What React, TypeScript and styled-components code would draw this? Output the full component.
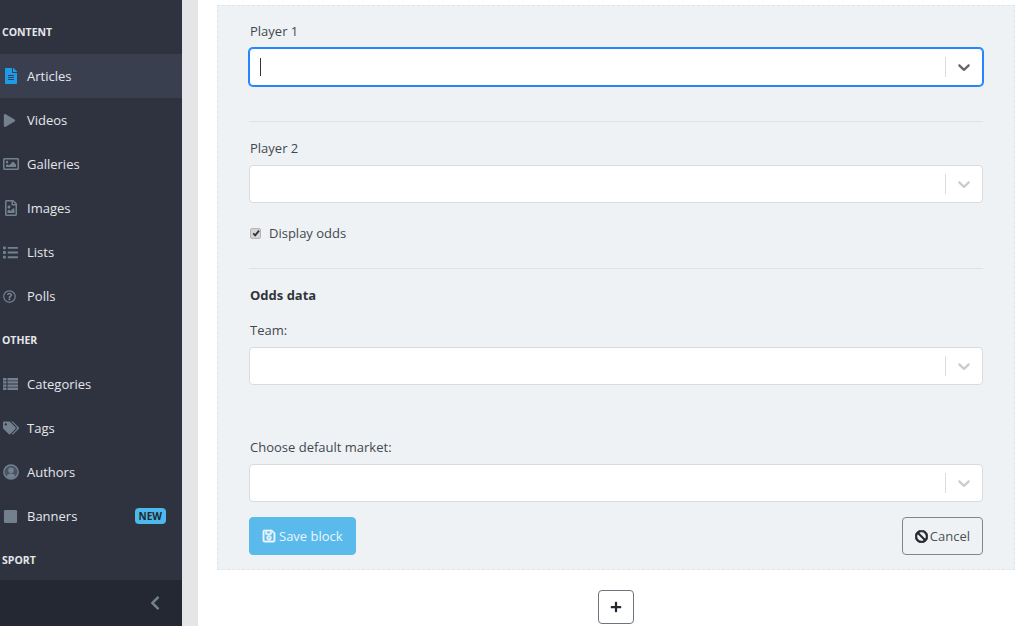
import type { ReactNode } from 'react';
import styled, { createGlobalStyle } from 'styled-components';
import {
  FaBan,
  FaChevronLeft,
  FaFileAlt,
  FaList,
  FaPlay,
  FaPlus,
  FaRegFileImage,
  FaRegImage,
  FaRegQuestionCircle,
  FaRegSave,
  FaSquare,
  FaTags,
} from 'react-icons/fa';

const GlobalStyle = createGlobalStyle`
  html, body {
    margin: 0;
    padding: 0;
    height: 100%;
    overflow: hidden;
    background: #fff;
    font-family: "Open Sans", "Noto Sans", "Liberation Sans", sans-serif;
    font-size: 13px;
    color: #3f4850;
  }
  * { box-sizing: border-box; }
`;

const Chevron = () => (
  <svg width="20" height="20" viewBox="0 0 20 20" fill="currentColor">
    <path d="M4.516 7.548c0.436-0.446 1.043-0.481 1.576 0l3.908 3.747 3.908-3.747c0.533-0.481 1.141-0.446 1.574 0 0.436 0.445 0.408 1.197 0 1.615-0.406 0.418-4.695 4.502-4.695 4.502-0.217 0.223-0.502 0.335-0.787 0.335s-0.57-0.112-0.789-0.335c0 0-4.287-4.084-4.695-4.502s-0.436-1.17 0-1.615z" />
  </svg>
);

// dense four row list, the icon pack only has blockier ones
const CategoriesIcon = () => (
  <svg width="15" height="12" viewBox="0 0 15 12" fill="currentColor">
    <path d="M0 0h3.5v2.4H0zM4.5 0H15v2.4H4.5zM0 3.2h3.5v2.4H0zM4.5 3.2H15v2.4H4.5zM0 6.4h3.5v2.4H0zM4.5 6.4H15v2.4H4.5zM0 9.6h3.5V12H0zM4.5 9.6H15V12H4.5z" />
  </svg>
);

const AuthorIcon = () => (
  <svg width="16" height="16" viewBox="0 0 16 16">
    <circle cx="8" cy="8" r="7.1" fill="#4a5361" stroke="currentColor" strokeWidth="1.5" />
    <circle cx="8" cy="6.3" r="2.8" fill="currentColor" />
    <path d="M3.6 12.6c.5-2.2 2-3.2 4.4-3.2s3.900 1 4.400 3.200c-1.100 1.100-2.600 1.800-4.400 1.800s-3.300-.7-4.400-1.800z" fill="currentColor" />
  </svg>
);

const Select = ({ focused }: { focused?: boolean }) => (
  <SelectBox $focused={focused}>
    <SelectValue>{focused && <Caret />}</SelectValue>
    <SelectDivider />
    <SelectArrow $focused={focused}>
      <Chevron />
    </SelectArrow>
  </SelectBox>
);

const NavItem = ({
  icon,
  label,
  active,
  badge,
}: {
  icon: ReactNode;
  label: string;
  active?: boolean;
  badge?: string;
}) => (
  <NavRow $active={active}>
    <NavIcon $active={active}>{icon}</NavIcon>
    <span>{label}</span>
    {badge && <Badge>{badge}</Badge>}
  </NavRow>
);

export default function App() {
  return (
    <>
      <GlobalStyle />
      <Page>
        <Sidebar>
          <Nav>
            <NavTitle>CONTENT</NavTitle>
            <NavItem active icon={<FaFileAlt size={16} />} label="Articles" />
            <NavItem icon={<FaPlay size={13} />} label="Videos" />
            <NavItem icon={<FaRegImage size={16} />} label="Galleries" />
            <NavItem icon={<FaRegFileImage size={16} />} label="Images" />
            <NavItem icon={<FaList size={15} />} label="Lists" />
            <NavItem icon={<FaRegQuestionCircle size={13} />} label="Polls" />
            <NavTitle>OTHER</NavTitle>
            <NavItem icon={<CategoriesIcon />} label="Categories" />
            <NavItem icon={<FaTags size={16} />} label="Tags" />
            <NavItem icon={<AuthorIcon />} label="Authors" />
            <NavItem icon={<FaSquare size={15} />} label="Banners" badge="NEW" />
            <NavTitle>SPORT</NavTitle>
          </Nav>
          <SidebarFooter>
            <FaChevronLeft size={16} />
          </SidebarFooter>
        </Sidebar>
        <Main>
          <Panel>
            <Label>Player 1</Label>
            <Select focused />
            <Rule $top={35} />
            <Label $top={16}>Player 2</Label>
            <Select />
            <CheckRow>
              <CheckBox>
                <svg width="8" height="8" viewBox="0 0 10 10" fill="none" stroke="#333" strokeWidth="2.2">
                  <path d="M1.500 5.500 L4 8 L8.800 2" />
                </svg>
              </CheckBox>
              Display odds
            </CheckRow>
            <Rule $top={24} />
            <Heading>Odds data</Heading>
            <Label $top={14}>Team:</Label>
            <Select />
            <Label $top={52}>Choose default market:</Label>
            <Select />
            <Actions>
              <SaveButton>
                <FaRegSave size={14} />
                Save block
              </SaveButton>
              <CancelButton>
                <FaBan size={13} />
                Cancel
              </CancelButton>
            </Actions>
          </Panel>
          <AddRow>
            <AddButton>
              <FaPlus size={12} />
            </AddButton>
          </AddRow>
        </Main>
      </Page>
    </>
  );
}

const Page = styled.div`
  display: flex;
  height: 626px;
  width: 1024px;
  overflow: hidden;
`;

const Sidebar = styled.aside`
  width: 182px;
  flex-shrink: 0;
  display: flex;
  flex-direction: column;
  background: #2f3340;
  color: #e4e7ea;
`;

const Nav = styled.nav`
  flex: 1;
  min-height: 0;
  overflow: hidden;
  padding-top: 10px;
`;

const NavTitle = styled.div`
  height: 44px;
  display: flex;
  align-items: center;
  padding-left: 2px;
  font-size: 10.5px;
  font-weight: 700;
  color: #e4e7ea;
`;

const NavRow = styled.div<{ $active?: boolean }>`
  height: 44px;
  display: flex;
  align-items: center;
  padding-right: 16px;
  font-size: 13px;
  background: ${(p) => (p.$active ? '#3a3f50' : 'transparent')};
  color: #e4e7ea;
`;

const NavIcon = styled.span<{ $active?: boolean }>`
  width: 27px;
  padding-left: 3px;
  display: flex;
  align-items: center;
  flex-shrink: 0;
  color: ${(p) => (p.$active ? '#1b9be8' : '#73818f')};
`;

const Badge = styled.span`
  margin-left: auto;
  height: 16px;
  padding: 0 4px;
  display: flex;
  align-items: center;
  border-radius: 4px;
  background: #4db8ee;
  color: #23282c;
  font-size: 10px;
  font-weight: 700;
`;

const SidebarFooter = styled.div`
  height: 46px;
  flex-shrink: 0;
  display: flex;
  align-items: center;
  justify-content: flex-end;
  padding-right: 19px;
  background: #242833;
  color: #73818f;
`;

const Main = styled.main`
  flex: 1;
  margin-left: 16px;
  padding: 5px 9px 0 19px;
  background: #fff;
  box-shadow: -16px 0 0 #e4e5e6;
`;

const Panel = styled.section`
  display: flex;
  flex-direction: column;
  height: 565px;
  padding: 15px 31px 0 31px;
  background: #eff2f5;
  border: 1px dashed #e2e5e9;
`;

const Label = styled.div<{ $top?: number }>`
  height: 21px;
  line-height: 20px;
  padding-left: 1px;
  margin-top: ${(p) => p.$top ?? 0}px;
  margin-bottom: 6px;
  color: #3f4850;
`;

const Rule = styled.hr<{ $top: number }>`
  width: 100%;
  height: 1px;
  margin: ${(p) => p.$top}px 0 0;
  border: 0;
  background: #dfe3e7;
`;

const SelectBox = styled.div<{ $focused?: boolean }>`
  height: 38px;
  flex-shrink: 0;
  display: flex;
  align-items: center;
  background: #fff;
  border: 1px solid ${(p) => (p.$focused ? '#2684ff' : '#d9dcdf')};
  border-radius: 4px;
  box-shadow: ${(p) => (p.$focused ? '0 0 0 1px #2684ff' : 'none')};
`;

const SelectValue = styled.div`
  flex: 1;
  display: flex;
  align-items: center;
  padding-left: 10px;
`;

const Caret = styled.span`
  width: 1px;
  height: 18px;
  background: #333;
`;

const SelectDivider = styled.span`
  width: 1px;
  height: 20px;
  background: #dcdcdc;
`;

const SelectArrow = styled.span<{ $focused?: boolean }>`
  width: 36px;
  display: flex;
  align-items: center;
  justify-content: center;
  color: ${(p) => (p.$focused ? '#666' : '#ccc')};
`;

const CheckRow = styled.label`
  height: 21px;
  margin-top: 20px;
  padding-bottom: 1px;
  display: flex;
  align-items: center;
  gap: 8px;
  color: #3f4850;
`;

const CheckBox = styled.span`
  width: 11px;
  height: 11px;
  display: flex;
  align-items: center;
  justify-content: center;
  margin-left: 1px;
  background: #d4d4d4;
  border: 1px solid #b5b5b5;
  border-radius: 2px;
`;

const Heading = styled.div`
  height: 21px;
  line-height: 20px;
  padding-left: 1px;
  margin-top: 16px;
  font-weight: 700;
  color: #2f353a;
`;

const Actions = styled.div`
  display: flex;
  justify-content: space-between;
  margin-top: 15px;
`;

const ButtonBase = styled.button`
  height: 38px;
  display: flex;
  align-items: center;
  padding: 0 12px;
  font: inherit;
  border-radius: 4px;
`;

const SaveButton = styled(ButtonBase)`
  gap: 3px;
  background: #5bbaec;
  border: 1px solid #5bbaec;
  color: #eaf6fd;
  svg { stroke: currentColor; stroke-width: 20; }
`;

const CancelButton = styled(ButtonBase)`
  gap: 2px;
  background: transparent;
  border: 1px solid #7f868c;
  color: #4a5259;
  svg { color: #23282c; stroke: currentColor; stroke-width: 30; }
`;

const AddRow = styled.div`
  display: flex;
  justify-content: center;
  margin-top: 20px;
`;

const AddButton = styled.button`
  width: 36px;
  height: 34px;
  display: flex;
  align-items: center;
  justify-content: center;
  padding: 0;
  background: #fff;
  border: 1px solid #6c757d;
  border-radius: 4px;
  color: #23282c;
`;
